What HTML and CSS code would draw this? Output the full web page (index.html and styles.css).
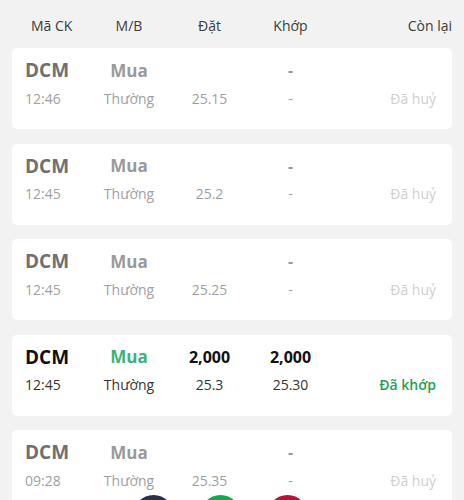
FILE: index.html
```html
<!DOCTYPE html>
<html lang="vi">
<head>
    <meta charset="UTF-8">
    <meta name="viewport" content="width=device-width, initial-scale=1.0">
    <title>Sổ lệnh</title>
    <link rel="stylesheet" href="styles.css">
</head>
<body>
    <!-- Column header -->
    <div class="head">
        <span>Mã CK</span>
        <span class="c">M/B</span>
        <span class="c">Đặt</span>
        <span class="c">Khớp</span>
        <span class="r">Còn lại</span>
    </div>

    <!-- Orders -->
    <div class="list">
        <div class="order cancelled">
            <span class="sym">DCM</span>
            <span class="side c">Mua</span>
            <span class="qty c"></span>
            <span class="qty c">-</span>
            <span></span>
            <span class="sub">12:46</span>
            <span class="sub c">Thường</span>
            <span class="sub c">25.15</span>
            <span class="sub c">-</span>
            <span class="status r">Đã huỷ</span>
        </div>

        <div class="order cancelled">
            <span class="sym">DCM</span>
            <span class="side c">Mua</span>
            <span class="qty c"></span>
            <span class="qty c">-</span>
            <span></span>
            <span class="sub">12:45</span>
            <span class="sub c">Thường</span>
            <span class="sub c">25.2</span>
            <span class="sub c">-</span>
            <span class="status r">Đã huỷ</span>
        </div>

        <div class="order cancelled">
            <span class="sym">DCM</span>
            <span class="side c">Mua</span>
            <span class="qty c"></span>
            <span class="qty c">-</span>
            <span></span>
            <span class="sub">12:45</span>
            <span class="sub c">Thường</span>
            <span class="sub c">25.25</span>
            <span class="sub c">-</span>
            <span class="status r">Đã huỷ</span>
        </div>

        <div class="order matched">
            <span class="sym">DCM</span>
            <span class="side c">Mua</span>
            <span class="qty c">2,000</span>
            <span class="qty c">2,000</span>
            <span></span>
            <span class="sub">12:45</span>
            <span class="sub c">Thường</span>
            <span class="sub c">25.3</span>
            <span class="sub c">25.30</span>
            <span class="status r">Đã khớp</span>
        </div>

        <div class="order cancelled">
            <span class="sym">DCM</span>
            <span class="side c">Mua</span>
            <span class="qty c"></span>
            <span class="qty c">-</span>
            <span></span>
            <span class="sub">09:28</span>
            <span class="sub c">Thường</span>
            <span class="sub c">25.35</span>
            <span class="sub c">-</span>
            <span class="status r">Đã huỷ</span>
        </div>
    </div>

    <!-- Floating action buttons -->
    <div class="fab">
        <span class="dot navy"></span>
        <span class="dot green"></span>
        <span class="dot red"></span>
    </div>
</body>
</html>
```

FILE: styles.css
```css
/* Basic Reset */
* {
    margin: 0;
    padding: 0;
    box-sizing: border-box;
}

body {
    background: #f2f2f2;
    font-family: "Open Sans", Arial, sans-serif;
    padding: 0 12px;
    overflow: hidden;
    height: 500px;
}

.c {
    text-align: center;
}

.r {
    text-align: right;
}

/* Header */
.head {
    display: grid;
    grid-template-columns: 58px 80px 81px 81px 1fr;
    align-items: center;
    height: 48px;
    padding: 2px 0 0 19px;
    font-size: 14px;
    color: #3a3a3a;
}

/* Order cards */
.order {
    display: grid;
    grid-template-columns: 64px 80px 81px 81px 1fr;
    grid-template-rows: 24px 24px;
    row-gap: 4px;
    align-items: center;
    height: 81px;
    margin-bottom: 14.5px;
    padding: 10px 16px 0 13px;
    background: #fff;
    border-radius: 5px;
    white-space: nowrap;
}

.sym {
    font-size: 19px;
    font-weight: 700;
}

.side {
    font-size: 17px;
    font-weight: 700;
}

.qty {
    font-size: 16px;
    font-weight: 700;
}

.sub,
.status {
    font-size: 14px;
}

.cancelled .sym {
    color: #707070;
}

.cancelled .side {
    color: #9a9a9a;
}

.cancelled .qty {
    color: #9a9a9a;
}

.cancelled .sub {
    color: #a0a0a0;
}

.cancelled .status {
    color: #cfcfcf;
}

.matched .sym,
.matched .qty {
    color: #111;
}

.matched .side {
    color: #3bb27a;
}

.matched .sub {
    color: #333;
}

.matched .status {
    color: #1aa352;
    font-weight: 600;
}

/* Floating buttons */
.fab {
    position: fixed;
    left: 133px;
    bottom: -36px;
    display: flex;
    gap: 26px;
}

.dot {
    width: 41px;
    height: 41px;
    border-radius: 50%;
}

.navy {
    background: #2c3044;
}

.green {
    background: #12a84f;
}

.red {
    background: #b3123a;
}
```
